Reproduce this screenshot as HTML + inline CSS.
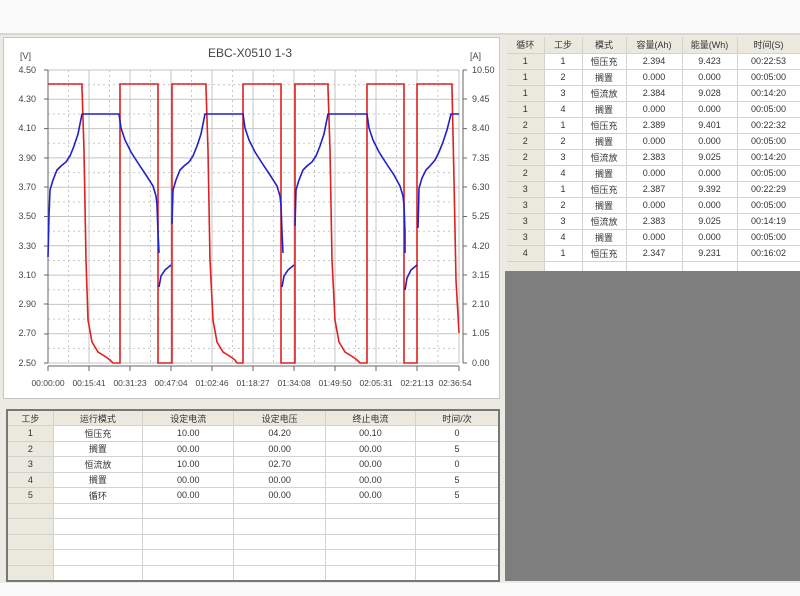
<!DOCTYPE html>
<html><head><meta charset="utf-8"><style>
*{margin:0;padding:0;box-sizing:border-box}
body{width:800px;height:596px;background:#fbfbfb;position:relative;overflow:hidden;font-family:"Liberation Sans","Noto Sans CJK SC",sans-serif;}
.frame{position:absolute;left:0;top:33px;width:800px;height:550px;background:#ecebe3;border-top:2px solid #d8d8d0}
.chart{position:absolute;left:3px;top:37px;width:497px;height:362px;background:#fff;border:1px solid #c8c8c0}
table{border-collapse:collapse;position:absolute;font-size:9px;color:#333;table-layout:fixed}
td{text-align:center;border-right:1px solid #d2d2d2;border-bottom:1px solid #d2d2d2;height:16px;padding:0;white-space:nowrap;overflow:hidden}
tr.h td{background:#ebe9de;}
td.f{background:#ebe9de}
#rt{left:507px;top:37px;width:293px;background:#fff}
#bt{left:6px;top:409px;width:494px;background:#fff;border:2px solid #777}
#bt td{height:15.5px}
.gray{position:absolute;left:505px;top:271px;width:295px;height:310px;background:#7e7e7e}
</style></head><body>
<div class="frame"></div>
<div class="chart"></div>
<svg style="position:absolute;left:0;top:0" width="800" height="596">
<g font-family="Liberation Sans, sans-serif" font-size="9" fill="#444">
<text x="250" y="57" font-size="12" text-anchor="middle">EBC-X0510 1-3</text>
<text x="20" y="59" font-size="9">[V]</text>
<text x="470" y="59" font-size="9">[A]</text>
<g text-anchor="end">
<text x="36" y="73">4.50</text><text x="36" y="102">4.30</text><text x="36" y="131">4.10</text><text x="36" y="161">3.90</text><text x="36" y="190">3.70</text><text x="36" y="219">3.50</text><text x="36" y="249">3.30</text><text x="36" y="278">3.10</text><text x="36" y="307">2.90</text><text x="36" y="336">2.70</text><text x="36" y="366">2.50</text>
</g>
<g>
<text x="472" y="73">10.50</text><text x="472" y="102">9.45</text><text x="472" y="131">8.40</text><text x="472" y="161">7.35</text><text x="472" y="190">6.30</text><text x="472" y="219">5.25</text><text x="472" y="249">4.20</text><text x="472" y="278">3.15</text><text x="472" y="307">2.10</text><text x="472" y="336">1.05</text><text x="472" y="366">0.00</text>
</g>
<g text-anchor="middle" font-size="8.5">
<text x="48" y="386">00:00:00</text><text x="89" y="386">00:15:41</text><text x="130" y="386">00:31:23</text><text x="171" y="386">00:47:04</text><text x="212" y="386">01:02:46</text><text x="253" y="386">01:18:27</text><text x="294" y="386">01:34:08</text><text x="335" y="386">01:49:50</text><text x="376" y="386">02:05:31</text><text x="417" y="386">02:21:13</text><text x="455" y="386">02:36:54</text>
</g>
</g>
<g stroke="#c4c4c4" stroke-width="1">
<path d="M48 70H459M48 99.3H459M48 128.6H459M48 157.9H459M48 187.2H459M48 216.5H459M48 245.8H459M48 275.1H459M48 304.4H459M48 333.7H459M48 363H459"/>
<path d="M89 70V363M130 70V363M171 70V363M212 70V363M253 70V363M294 70V363M335 70V363M376 70V363M417 70V363M459 70V363"/>
</g>
<g stroke="#c8c8c8" stroke-width="1" stroke-dasharray="2,3">
<path d="M48 84.6H459M48 114H459M48 143.3H459M48 172.6H459M48 201.9H459M48 231.2H459M48 260.5H459M48 289.8H459M48 319.1H459M48 348.4H459"/>
<path d="M68.5 70V363M109.5 70V363M150.5 70V363M191.5 70V363M232.5 70V363M273.5 70V363M314.5 70V363M355.5 70V363M396.5 70V363M438 70V363"/>
</g>
<g stroke="#666" stroke-width="1" fill="none">
<path d="M48 70V363M44 70H48M44 99H48M44 128.6H48M44 158H48M44 187H48M44 216.5H48M44 246H48M44 275H48M44 304H48M44 334H48M44 363H48"/>
<path d="M463 70V363M463 70H467M463 99H467M463 128.6H467M463 158H467M463 187H467M463 216.5H467M463 246H467M463 275H467M463 304H467M463 334H467M463 363H467"/>
<path d="M48 366H459M48 366V371M89 366V371M130 366V371M171 366V371M212 366V371M253 366V371M294 366V371M335 366V371M376 366V371M417 366V371M459 366V371"/>
</g>
<path fill="none" stroke="#e02020" stroke-width="1.6" d="M48 84H82V88L84 150L86 260L88 320L92 342L98 352L106 357L110 360L113 363H120V84H158V363H172V84H206V88L208 150L210 260L213 320L217 342L223 352L231 357L235 360L237 363H243V84H281V363H295V84H328V88L330 150L332 260L335 320L339 342L345 352L353 357L357 360L360 363H367V84H404V363H417V84H452V88L454 180L456 280L459 333"/>
<path fill="none" stroke="#2020c8" stroke-width="1.6" d="M48 257L49 216L50 190L53 180L57 170L61 166L66 162L70 156L74 146L78 134L82 114H119L121 128L125 140L131 152L138 163L146 175L153 186L156 196L157 205L158 232L159 253M159 287L161 276L165 270L171 265M172 224L173 190L176 180L180 170L184 166L189 162L193 156L197 146L201 134L205 114H243L245 128L249 140L255 152L262 163L270 175L277 186L280 196L281 205L282 232L283 253M282 287L284 276L288 270L294 265M295 226L296 190L299 180L303 170L307 166L312 162L316 156L320 146L324 134L328 114H367L369 128L373 140L379 152L386 163L394 175L400 186L403 196L404 205L405 232L405 253M405 290L407 278L411 270L417 265M418 228L419 188L422 178L426 170L430 166L435 160L439 152L443 142L447 130L451 114H459"/>
</svg>
<table id="rt">
<colgroup><col style="width:37px"><col style="width:38px"><col style="width:44px"><col style="width:56px"><col style="width:55px"><col style="width:63px"></colgroup>
<tr class="h"><td>循环</td><td>工步</td><td>模式</td><td>容量(Ah)</td><td>能量(Wh)</td><td>时间(S)</td></tr>
<tr><td class="f">1</td><td>1</td><td>恒压充</td><td>2.394</td><td>9.423</td><td>00:22:53</td></tr>
<tr><td class="f">1</td><td>2</td><td>搁置</td><td>0.000</td><td>0.000</td><td>00:05:00</td></tr>
<tr><td class="f">1</td><td>3</td><td>恒流放</td><td>2.384</td><td>9.028</td><td>00:14:20</td></tr>
<tr><td class="f">1</td><td>4</td><td>搁置</td><td>0.000</td><td>0.000</td><td>00:05:00</td></tr>
<tr><td class="f">2</td><td>1</td><td>恒压充</td><td>2.389</td><td>9.401</td><td>00:22:32</td></tr>
<tr><td class="f">2</td><td>2</td><td>搁置</td><td>0.000</td><td>0.000</td><td>00:05:00</td></tr>
<tr><td class="f">2</td><td>3</td><td>恒流放</td><td>2.383</td><td>9.025</td><td>00:14:20</td></tr>
<tr><td class="f">2</td><td>4</td><td>搁置</td><td>0.000</td><td>0.000</td><td>00:05:00</td></tr>
<tr><td class="f">3</td><td>1</td><td>恒压充</td><td>2.387</td><td>9.392</td><td>00:22:29</td></tr>
<tr><td class="f">3</td><td>2</td><td>搁置</td><td>0.000</td><td>0.000</td><td>00:05:00</td></tr>
<tr><td class="f">3</td><td>3</td><td>恒流放</td><td>2.383</td><td>9.025</td><td>00:14:19</td></tr>
<tr><td class="f">3</td><td>4</td><td>搁置</td><td>0.000</td><td>0.000</td><td>00:05:00</td></tr>
<tr><td class="f">4</td><td>1</td><td>恒压充</td><td>2.347</td><td>9.231</td><td>00:16:02</td></tr>
<tr><td class="f" style="height:14px"></td><td></td><td></td><td></td><td></td><td></td></tr>
</table>
<div class="gray"></div>
<table id="bt">
<colgroup><col style="width:46px"><col style="width:89px"><col style="width:91px"><col style="width:91px"><col style="width:90px"><col style="width:83px"></colgroup>
<tr class="h"><td>工步</td><td>运行模式</td><td>设定电流</td><td>设定电压</td><td>终止电流</td><td>时间/次</td></tr>
<tr><td class="f">1</td><td>恒压充</td><td>10.00</td><td>04.20</td><td>00.10</td><td>0</td></tr>
<tr><td class="f">2</td><td>搁置</td><td>00.00</td><td>00.00</td><td>00.00</td><td>5</td></tr>
<tr><td class="f">3</td><td>恒流放</td><td>10.00</td><td>02.70</td><td>00.00</td><td>0</td></tr>
<tr><td class="f">4</td><td>搁置</td><td>00.00</td><td>00.00</td><td>00.00</td><td>5</td></tr>
<tr><td class="f">5</td><td>循环</td><td>00.00</td><td>00.00</td><td>00.00</td><td>5</td></tr>
<tr><td class="f"></td><td></td><td></td><td></td><td></td><td></td></tr>
<tr><td class="f"></td><td></td><td></td><td></td><td></td><td></td></tr>
<tr><td class="f"></td><td></td><td></td><td></td><td></td><td></td></tr>
<tr><td class="f"></td><td></td><td></td><td></td><td></td><td></td></tr>
<tr><td class="f" style="border-bottom:none"></td><td style="border-bottom:none"></td><td style="border-bottom:none"></td><td style="border-bottom:none"></td><td style="border-bottom:none"></td><td style="border-bottom:none"></td></tr>
</table>
</body></html>
